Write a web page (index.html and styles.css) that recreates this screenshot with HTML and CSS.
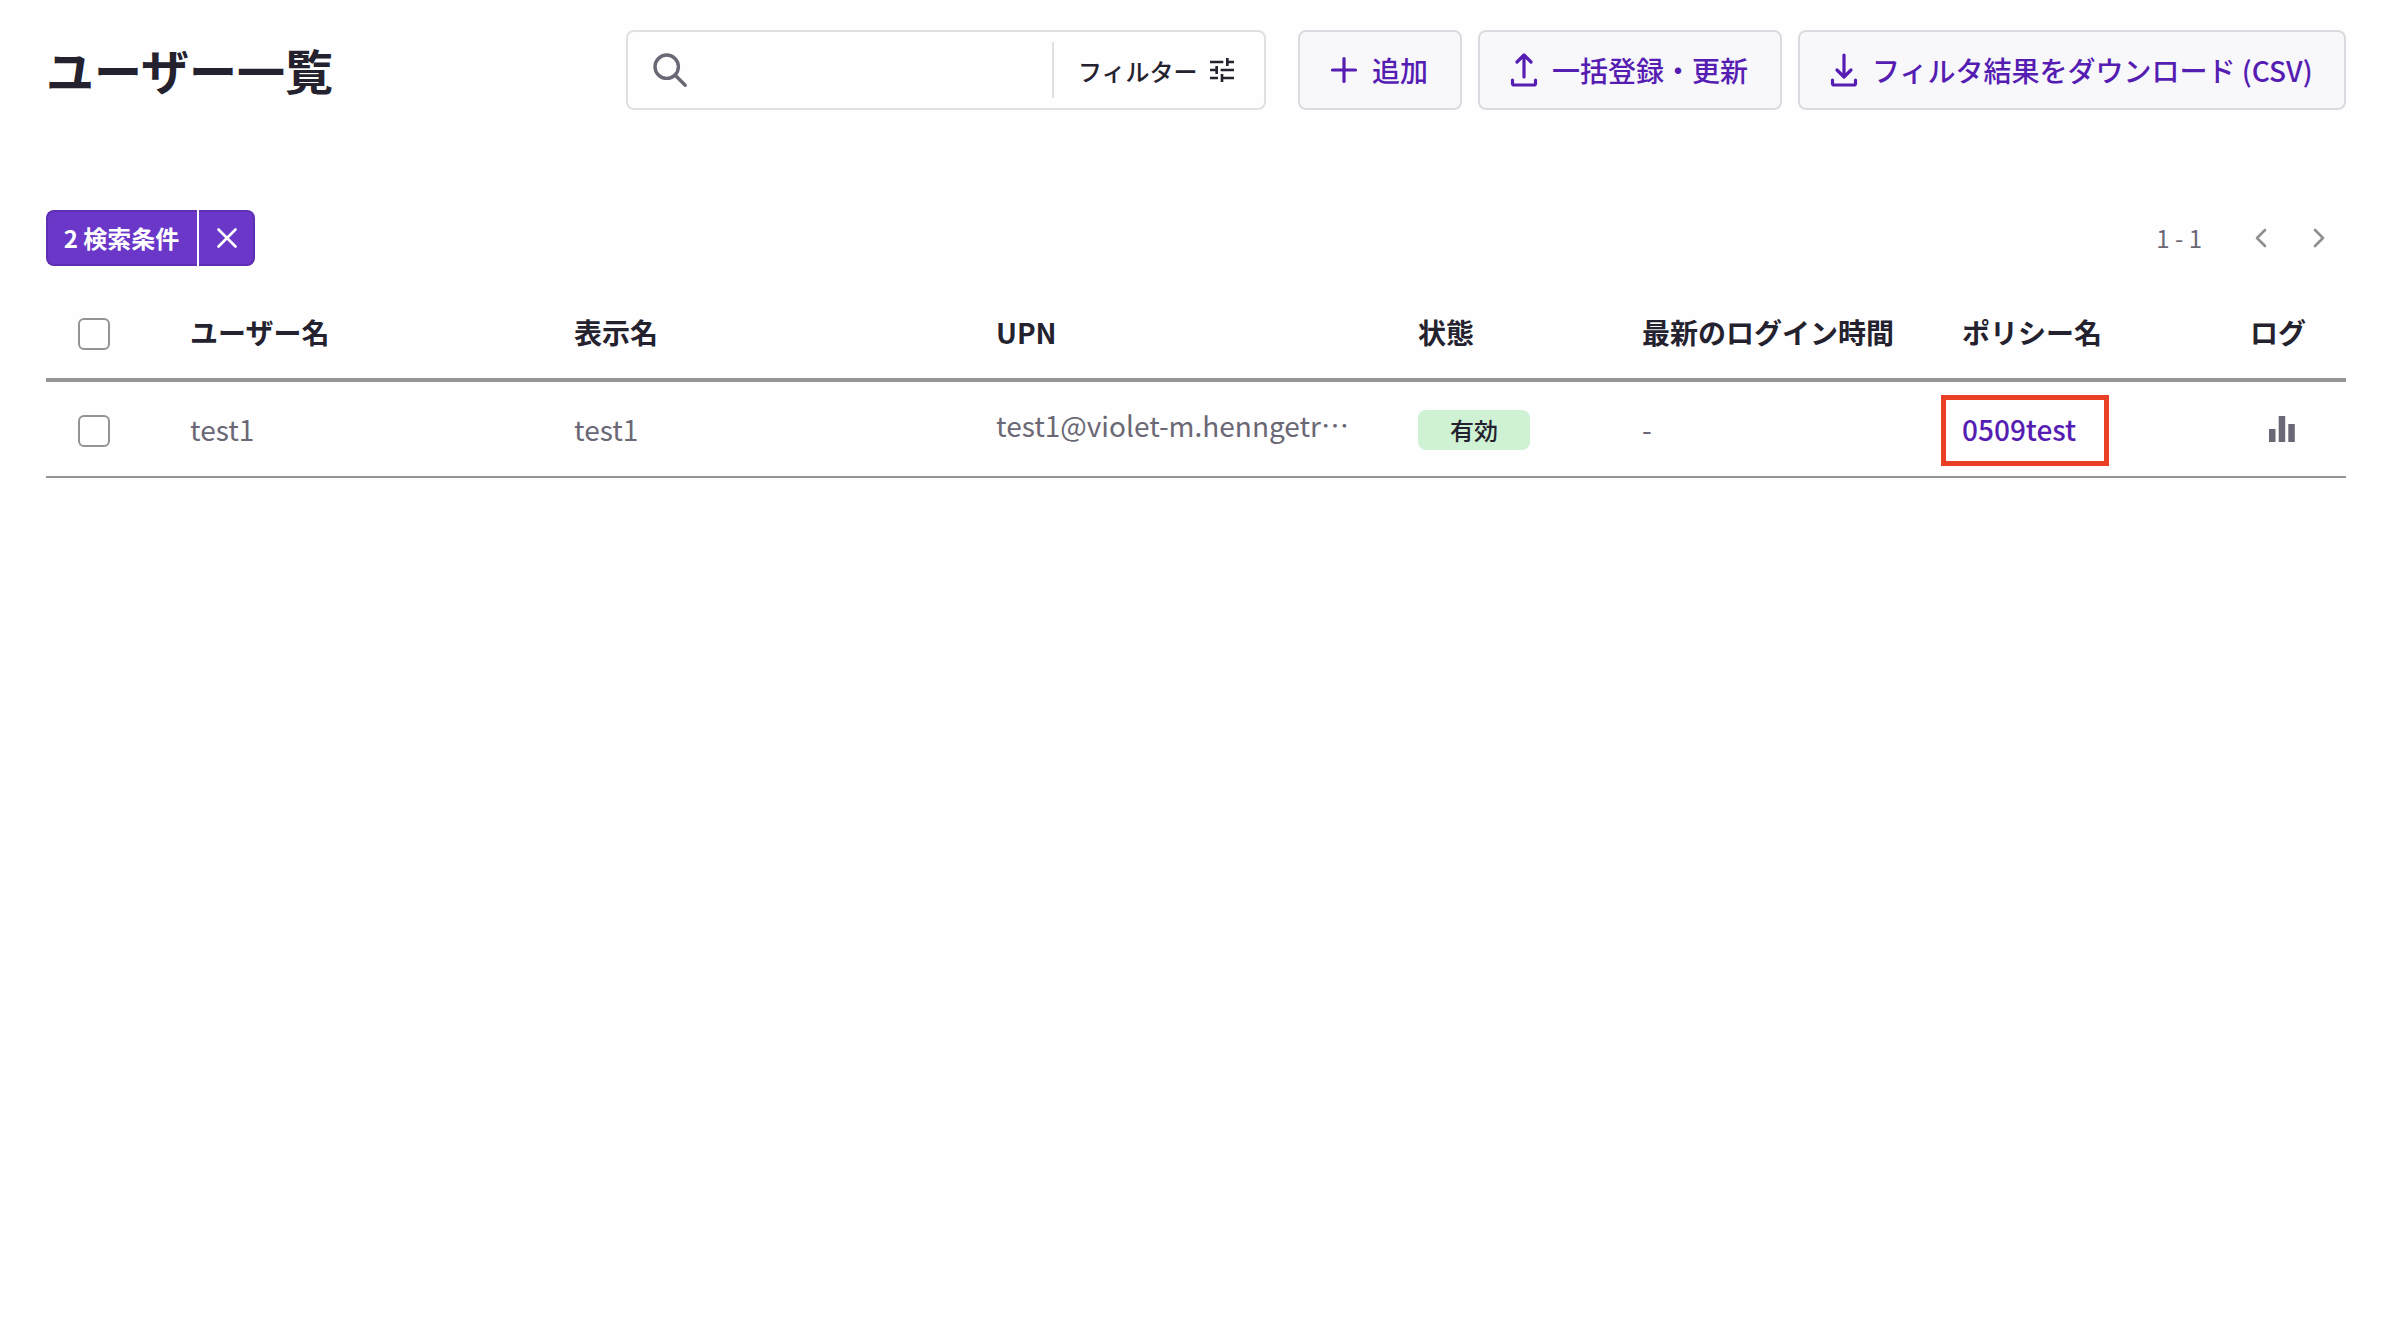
FILE: index.html
```html
<!DOCTYPE html>
<html lang="ja">
<head>
    <meta charset="UTF-8">
    <meta name="viewport" content="width=device-width, initial-scale=1.0">
    <title>ユーザー一覧</title>
    <link rel="stylesheet" href="styles.css">
</head>
<body>
    <div class="page">
        <header class="page-header">
            <h1>ユーザー一覧</h1>
            <div class="search-box">
                <svg class="search-icon" width="36" height="36" viewBox="0 0 36 36">
                    <circle cx="13.700" cy="14.700" r="11.700"/>
                    <path d="M22 23l10.200 10.200"/>
                </svg>
                <input type="text" class="search-input" aria-label="検索">
                <button class="filter-button">
                    <span>フィルター</span>
                    <svg width="32" height="32" viewBox="0 0 24 24">
                        <path d="M3 17v2h6v-2H3zM3 5v2h10V5H3zm10 16v-2h8v-2h-8v-2h-2v6h2zM7 9v2H3v2h4v2h2V9H7zm14 4v-2H11v2h10zm-6-4h2V7h4V5h-4V3h-2v6z"/>
                    </svg>
                </button>
            </div>
            <div class="actions">
                <button class="action-button">
                    <svg width="28" height="36" viewBox="0 0 28 36">
                        <path d="M14 6.500v23M2.500 18h23"/>
                    </svg>
                    <span>追加</span>
                </button>
                <button class="action-button">
                    <svg width="28" height="36" viewBox="0 0 28 36">
                        <path d="M14 25V4M7 10l7-7 7 7M2.500 28v3.500q0 1.500 1.500 1.500h20q1.500 0 1.500-1.500V28"/>
                    </svg>
                    <span>一括登録・更新</span>
                </button>
                <button class="action-button download-button">
                    <svg width="28" height="36" viewBox="0 0 28 36">
                        <path d="M14 3v21M7 18l7 7 7-7M2.500 28v3.500q0 1.500 1.500 1.500h20q1.500 0 1.500-1.500V28"/>
                    </svg>
                    <span>フィルタ結果をダウンロード (CSV)</span>
                </button>
            </div>
        </header>

        <div class="toolbar">
            <div class="conditions">
                <button class="conditions-label">2 検索条件</button>
                <button class="conditions-clear" aria-label="クリア">
                    <svg width="20" height="20" viewBox="0 0 20 20">
                        <path d="M1.500 1.500l17 17M18.500 1.500l-17 17"/>
                    </svg>
                </button>
            </div>
            <div class="pager">
                <span class="pager-range">1 - 1</span>
                <svg width="12" height="20" viewBox="0 0 12 20"><path d="M10 2l-8 8 8 8"/></svg>
                <svg width="12" height="20" viewBox="0 0 12 20"><path d="M2 2l8 8-8 8"/></svg>
            </div>
        </div>

        <table class="user-table">
            <colgroup>
                <col class="col-check">
                <col class="col-user">
                <col class="col-display">
                <col class="col-upn">
                <col class="col-status">
                <col class="col-login">
                <col class="col-policy">
                <col class="col-log">
            </colgroup>
            <thead>
                <tr>
                    <th class="check-cell"><input type="checkbox" class="checkbox"></th>
                    <th>ユーザー名</th>
                    <th>表示名</th>
                    <th>UPN</th>
                    <th>状態</th>
                    <th>最新のログイン時間</th>
                    <th>ポリシー名</th>
                    <th>ログ</th>
                </tr>
            </thead>
            <tbody>
                <tr>
                    <td class="check-cell"><input type="checkbox" class="checkbox"></td>
                    <td>test1</td>
                    <td>test1</td>
                    <td class="upn">test1@violet-m.henngetr⋯</td>
                    <td class="status"><span class="badge">有効</span></td>
                    <td>-</td>
                    <td class="policy"><a class="policy-link">0509test</a></td>
                    <td>
                        <svg class="log-icon" width="26" height="26" viewBox="0 0 26 26">
                            <path d="M0 13h6.500v13H0zM9.700 0h6.500v26H9.700zM19.300 8h6.500v18h-6.500z"/>
                        </svg>
                    </td>
                </tr>
            </tbody>
        </table>
    </div>
</body>
</html>
```
FILE: styles.css
```css
* {
    box-sizing: border-box;
}

body {
    margin: 0;
    background: #fefefe;
    color: #25222f;
    font-family: "Noto Sans CJK JP", "Noto Sans", sans-serif;
    font-size: 28px;
}

button {
    margin: 0;
    padding: 0;
    border: none;
    background: none;
    color: inherit;
    font-family: inherit;
    cursor: pointer;
}

svg {
    display: block;
    flex: none;
}

.page {
    padding: 30px 54px 0 46px;
}

/* Header */
.page-header {
    display: flex;
    align-items: center;
    height: 80px;
}

h1 {
    flex: none;
    width: 580px;
    margin: 0;
    padding-bottom: 2px;
    font-size: 48px;
    font-weight: bold;
    line-height: 78px;
}

.search-box {
    display: flex;
    flex: none;
    align-items: center;
    width: 640px;
    height: 80px;
    padding-left: 25px;
    border: 2px solid #e0e0e0;
    border-radius: 8px;
}

.search-icon {
    fill: none;
    stroke: #6b6875;
    stroke-width: 3.4;
    stroke-linecap: round;
}

.search-input {
    flex: 1;
    min-width: 0;
    height: 56px;
    border: none;
    outline: none;
    background: none;
    font: inherit;
}

.filter-button {
    display: flex;
    align-items: center;
    gap: 8px;
    width: 212px;
    height: 56px;
    padding-left: 24px;
    border-left: 2px solid #e0e0e0;
    font-size: 24px;
    font-weight: 500;
}

.filter-button svg {
    fill: #25222f;
}

.actions {
    display: flex;
    flex: 1;
    gap: 16px;
    min-width: 0;
    margin-left: 32px;
}

.action-button {
    display: flex;
    flex: none;
    align-items: center;
    gap: 14px;
    height: 80px;
    padding: 0 32px 0 30px;
    border: 2px solid #dbdae0;
    border-radius: 8px;
    background: #f8f8fb;
    color: #561db3;
    font-size: 28px;
    font-weight: 500;
    white-space: nowrap;
}

.download-button {
    flex: 1;
    min-width: 0;
    padding-right: 20px;
}

.action-button svg {
    fill: none;
    stroke: #561db3;
    stroke-width: 3.2;
    stroke-linecap: round;
    stroke-linejoin: round;
}

/* Toolbar */
.toolbar {
    display: flex;
    justify-content: space-between;
    align-items: center;
    height: 56px;
    margin-top: 100px;
}

.conditions {
    display: flex;
    gap: 2px;
}

.conditions-label,
.conditions-clear {
    display: flex;
    align-items: center;
    justify-content: center;
    height: 56px;
    border: 2px solid #5e2fb3;
    background: #6a37c9;
    color: #fff;
    font-size: 24px;
    font-weight: bold;
}

.conditions-label {
    width: 151px;
    padding: 0 2px 2px 0;
    border-right: none;
    border-radius: 8px 0 0 8px;
}

.conditions-clear {
    width: 56px;
    padding-left: 2px;
    border-left: none;
    border-radius: 0 8px 8px 0;
}

.conditions-clear svg {
    fill: none;
    stroke: #fff;
    stroke-width: 2.6;
    stroke-linecap: round;
}

.pager {
    display: flex;
    align-items: center;
    gap: 46px;
    padding-right: 21px;
    color: #6b6875;
    font-size: 24px;
}

.pager-range {
    margin-right: 7px;
    padding-bottom: 2px;
}

.pager svg {
    fill: none;
    stroke: #8f8f8f;
    stroke-width: 2.6;
    stroke-linecap: round;
    stroke-linejoin: round;
}

/* User list */
.user-table {
    width: 2300px;
    margin-top: 24px;
    table-layout: fixed;
    border-collapse: separate;
    border-spacing: 0;
}

.col-check { width: 144px; }
.col-user { width: 384px; }
.col-display { width: 422px; }
.col-upn { width: 422px; }
.col-status { width: 224px; }
.col-login { width: 320px; }
.col-policy { width: 288px; }
.col-log { width: 96px; }

th,
td {
    padding: 0;
    text-align: left;
    vertical-align: middle;
    line-height: 40px;
    white-space: nowrap;
}

th {
    height: 92px;
    padding-bottom: 4px;
    border-bottom: 4px solid #959595;
    font-weight: bold;
}

th.check-cell {
    padding-bottom: 0;
}

td {
    height: 96px;
    border-bottom: 2px solid #959595;
    color: #6b6875;
}

td.check-cell {
    padding-top: 4px;
}

td.status {
    padding-top: 2px;
}

td.policy {
    padding-top: 3px;
}

td.upn {
    padding-bottom: 8px;
}

.checkbox {
    display: block;
    appearance: none;
    width: 32px;
    height: 32px;
    margin: 0 0 0 32px;
    border: 2px solid #949494;
    border-radius: 6px;
    background: #fff;
}

.badge {
    display: block;
    width: 112px;
    height: 40px;
    border-radius: 8px;
    background: #cff2d4;
    color: #25222f;
    font-size: 24px;
    font-weight: 500;
    text-align: center;
}

.policy-link {
    display: block;
    width: 168px;
    height: 71px;
    margin-left: -21px;
    padding-left: 16px;
    border: 5px solid #e93f24;
    color: #561db3;
    font-weight: 500;
    line-height: 59px;
}

.log-icon {
    margin-left: 19px;
    fill: #6b6875;
}
```
